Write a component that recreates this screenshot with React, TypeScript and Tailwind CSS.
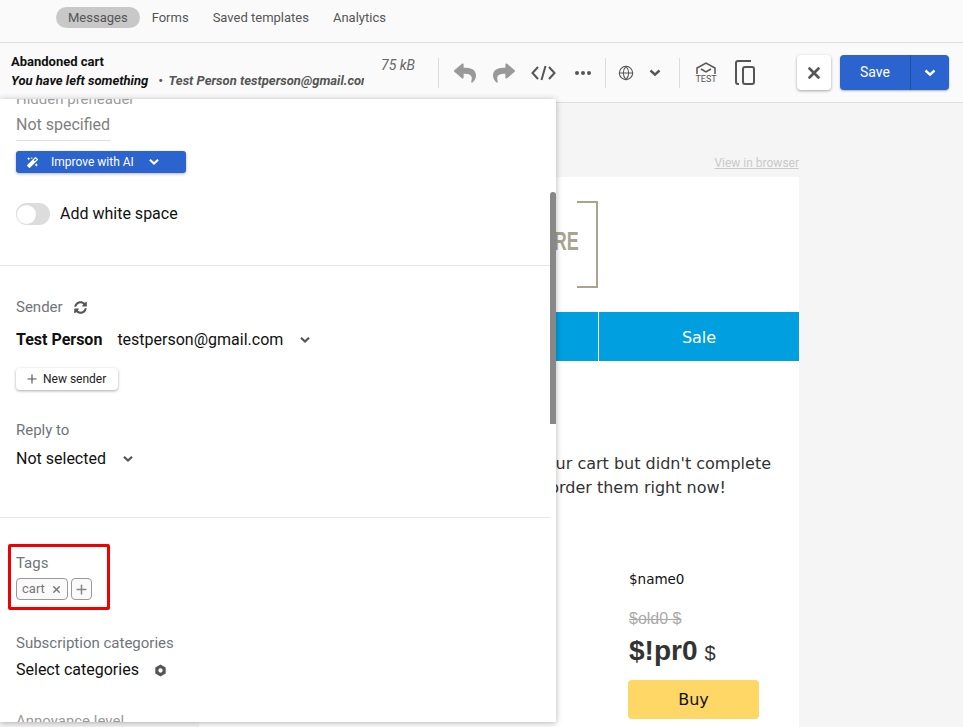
import { Globe, Plus, X } from 'lucide-react'
import { FaMagic, FaReply, FaShare, FaSyncAlt } from 'react-icons/fa'

function Chevron({ className = '' }: { className?: string }) {
  return (
    <svg viewBox="0 0 12 8" className={`h-[8px] w-[12px] ${className}`} fill="none" stroke="currentColor" strokeWidth="2.4">
      <path d="M1.5 1.5 6 5.7l4.5-4.2" />
    </svg>
  )
}

function Toolbar() {
  return (
    <div className="flex h-[60px] items-center border-b border-[#dedede] bg-[#fafafa] pl-[11px]">
      <div className="w-[353px] overflow-hidden pb-[4px] whitespace-nowrap">
        <p className="text-[13px] leading-[19px] font-bold text-[#111]">Abandoned cart</p>
        <p className="text-[13px] leading-[19px] font-bold text-[#111] italic">
          You have left something
          <span className="ml-[10px] text-[#555]">
            <span className="mr-[3px]">•</span> Test Person testperson@gmail.com
          </span>
        </p>
      </div>
      <span className="ml-[17px] w-[34px] pb-[14px] text-[14px] whitespace-nowrap text-[#666] italic">75 kB</span>
      <div className="ml-[23px] h-[30px] w-px bg-[#dcdcdc]" />
      <FaReply className="ml-[15px] h-[22px] w-[22px] text-[#999]" />
      <FaShare className="ml-[17px] h-[22px] w-[22px] text-[#999]" />
      <svg viewBox="0 0 25 16" className="ml-[16px] h-[16px] w-[25px] text-[#555]" fill="none" stroke="currentColor" strokeWidth="2">
        <path d="M7 2 1.500 8 7 14M18 2l5.500 6L18 14M14.500 1l-4 14" />
      </svg>
      <div className="ml-[19px] flex gap-[2px]">
        <span className="h-[4px] w-[4px] rounded-full bg-[#555]" />
        <span className="h-[4px] w-[4px] rounded-full bg-[#555]" />
        <span className="h-[4px] w-[4px] rounded-full bg-[#555]" />
      </div>
      <div className="ml-[14px] h-[30px] w-px bg-[#dcdcdc]" />
      <Globe className="ml-[12px] h-[16px] w-[16px] text-[#555]" strokeWidth={1.6} />
      <Chevron className="ml-[15px] text-[#555]" />
      <div className="ml-[18px] h-[30px] w-px bg-[#dcdcdc]" />
      <div className="ml-[16px] flex w-[20px] flex-col items-center">
        <svg viewBox="0 0 20 13" className="h-[13px] w-[20px] text-[#555]" fill="none" stroke="currentColor" strokeWidth="1.5">
          <path d="M1 12V6l9-5 9 5v6" />
          <path d="M5 7l5 3 5-3" />
        </svg>
        <span className="text-[9px] leading-[9px] text-[#555]">TEST</span>
      </div>
      <svg viewBox="0 0 20 25" className="ml-[19px] h-[25px] w-[20px] text-[#555]" fill="none" stroke="currentColor" strokeWidth="2">
        <path d="M4 24H3a2 2 0 0 1-2-2V3a2 2 0 0 1 2-2h13" />
        <rect x="8" y="7" width="11" height="17" rx="2" />
      </svg>
      <button className="ml-[42px] flex h-[35px] w-[34px] items-center justify-center rounded-[4px] bg-white shadow-[0_1px_3px_rgba(0,0,0,0.35)]">
        <X className="h-[18px] w-[18px] text-[#555]" strokeWidth={3.5} />
      </button>
      <div className="ml-[9px] flex h-[35px] w-[109px] overflow-hidden rounded-[4px] bg-[#2b63cf] text-white shadow-[0_1px_2px_rgba(0,0,0,0.3)]">
        <span className="flex w-[71px] items-center justify-center border-r border-[#1f4f9f] text-[14px]">Save</span>
        <span className="flex flex-1 items-center justify-center">
          <Chevron />
        </span>
      </div>
    </div>
  )
}

function Email() {
  return (
    <div className="ml-[199px] w-[600px]" style={{ fontFamily: '"DejaVu Sans", sans-serif' }}>
      <p className="h-[74px] pt-[53px] text-right text-[12px] leading-[14px] text-[#c9c9c9] underline" style={{ fontFamily: 'Roboto, sans-serif' }}>
        View in browser
      </p>
      <div className="bg-white pb-[20px]">
        <div className="relative flex h-[135px] justify-end pt-[24px] pr-[201px]">
          <span className="absolute top-[50px] right-[220px] origin-right scale-x-[0.72] text-[25px] leading-[28px] font-bold text-[#a8a48f]" style={{ fontFamily: '"Liberation Sans", sans-serif' }}>
            RE
          </span>
          <div className="h-[87px] w-[21px] border-y-2 border-r-2 border-[#a8a48f]" />
        </div>
        <div className="flex h-[49px] bg-[#009fdf] text-[16px] text-white">
          <div className="w-[400px] border-r border-white" />
          <div className="flex flex-1 items-center justify-center pt-[2px]">Sale</div>
        </div>
        <div className="pt-[91px] text-right text-[16px] leading-[24px] whitespace-nowrap text-[#333]">
          <p className="pr-[28px]">You added items to your cart but didn't complete</p>
          <p className="pr-[73px]">your order. You can order them right now!</p>
        </div>
        <div className="pt-[70px] pl-[430px]">
          <p className="text-[13.5px] leading-[18px] text-[#111]">$name0</p>
          <p className="mt-[22px] text-[16px] leading-[18px] text-[#aaa] line-through" style={{ fontFamily: '"Liberation Sans", sans-serif' }}>
            $old0 $
          </p>
          <p className="mt-[7px] leading-[32px] text-[#333]" style={{ fontFamily: '"Liberation Sans", sans-serif' }}>
            <span className="text-[28px] font-bold">$!pr0</span>
            <span className="ml-[7px] text-[20px]">$</span>
          </p>
          <button className="mt-[9px] ml-[-1px] h-[39px] w-[131px] rounded-[4px] bg-[#ffd766] pt-[1px] text-[16px] text-[#111]">Buy</button>
        </div>
      </div>
    </div>
  )
}

function Panel() {
  return (
    <aside className="absolute top-[99px] left-0 h-[623px] w-[556px] overflow-hidden rounded-tr-[2px] bg-white shadow-[0_1px_6px_rgba(0,0,0,0.3)]">
      <div className="w-[550px]">
        <div className="px-4">
          <p className="mt-[-9px] text-[15px] leading-[18px] text-[#9a9a9a]">Hidden preheader</p>
          <div className="mt-[6px] w-[95px] border-b border-[#dedede] pb-[5px] text-[16px] leading-[21px] text-[#808080]">Not specified</div>
          <button className="mt-[10px] flex h-[22px] w-[170px] items-center rounded-[3px] bg-[#2b63cf] pl-[11px] text-[12px] text-white shadow-[0_1px_3px_rgba(0,0,0,0.3)]">
            <FaMagic className="h-[11px] w-[11px]" />
            <span className="ml-[13px]">Improve with AI</span>
            <Chevron className="ml-[14px] scale-90" />
          </button>
          <div className="mt-[29px] flex items-center">
            <div className="flex h-[22px] w-[34px] items-center rounded-full bg-[#dcdcdc] pl-[1px]">
              <div className="h-[19px] w-[19px] rounded-full bg-white" />
            </div>
            <span className="ml-[10px] text-[16px] text-[#111]">Add white space</span>
          </div>
        </div>
        <div className="mt-[39px] border-t border-[#e8e8e8] px-4 pt-[31px]">
          <div className="flex items-center text-[15px] leading-[20px] text-[#70757a]">
            Sender
            <FaSyncAlt className="ml-[11px] h-[13px] w-[13px] text-[#555]" />
          </div>
          <div className="mt-[12px] flex items-center text-[16px] leading-[22px] text-[#111]">
            <span className="font-bold">Test Person</span>
            <span className="ml-[15px]">testperson@gmail.com</span>
            <Chevron className="ml-[16px] scale-90 text-[#555]" />
          </div>
          <button className="mt-[17px] flex h-[22px] w-[102px] items-center rounded-[4px] bg-white pl-[9px] text-[12px] text-[#222] shadow-[0_1px_3px_rgba(0,0,0,0.35)]">
            <Plus className="h-[14px] w-[14px] text-[#555]" strokeWidth={2} />
            <span className="ml-[4px]">New sender</span>
          </button>
          <p className="mt-[30px] text-[15px] leading-[20px] text-[#70757a]">Reply to</p>
          <div className="mt-[8px] flex items-center text-[16px] leading-[22px] text-[#111]">
            Not selected
            <Chevron className="ml-[16px] scale-90 text-[#555]" />
          </div>
        </div>
        <div className="mt-[47px] border-t border-[#e8e8e8] px-4 pt-[35px]">
          <p className="text-[15px] leading-[20px] text-[#70757a]">Tags</p>
          <div className="mt-[5px] flex gap-[3px]">
            <span className="flex h-[22px] w-[52px] items-center rounded-[4px] border border-[#999] bg-[#fafafa] pl-[5px] text-[13px] text-[#777]">
              cart
              <X className="ml-[6px] h-[11px] w-[11px] text-[#777]" strokeWidth={3} />
            </span>
            <span className="flex h-[22px] w-[21px] items-center justify-center rounded-[4px] border border-[#999] bg-[#fafafa]">
              <Plus className="h-[15px] w-[15px] text-[#888]" strokeWidth={2.4} />
            </span>
          </div>
          <p className="mt-[33px] text-[15px] leading-[20px] text-[#70757a]">Subscription categories</p>
          <div className="mt-[6px] flex items-center text-[16px] leading-[22px] text-[#111]">
            Select categories
            <svg viewBox="0 0 12 12" className="ml-[15px] h-[13px] w-[13px] text-[#555]">
              <path fill="currentColor" fillRule="evenodd" d="M6 .5 10.800 3.200v5.600L6 11.500 1.200 8.800V3.200zM6 4a2 2 0 1 0 0 4 2 2 0 0 0 0-4z" />
            </svg>
          </div>
          <p className="mt-[30px] text-[15px] leading-[20px] text-[#9a9a9a]">Annoyance level</p>
        </div>
      </div>
      <div className="absolute top-[93px] right-0 h-[232px] w-[6px] rounded-t-[3px] bg-[#888]" />
      <div className="absolute top-[445px] left-[8px] h-[66px] w-[102px] rounded-[2px] border-[3px] border-[#f00000]" />
    </aside>
  )
}

export default function App() {
  return (
    <div className="relative h-[727px] w-[963px] overflow-hidden bg-[#f5f5f5]" style={{ fontFamily: 'Roboto, sans-serif' }}>
      <div className="flex h-[43px] items-start gap-[6px] border-b border-[#dedede] bg-[#fafafa] pt-[7px] pl-[56px] text-[13px] leading-[21px] text-[#555]">
        <span className="rounded-full bg-[#c8c8c8] px-[12px]">Messages</span>
        <span className="px-[6px]">Forms</span>
        <span className="ml-[6px] px-[6px]">Saved templates</span>
        <span className="ml-[6px] px-[6px]">Analytics</span>
      </div>
      <Toolbar />
      <Email />
      <Panel />
    </div>
  )
}
